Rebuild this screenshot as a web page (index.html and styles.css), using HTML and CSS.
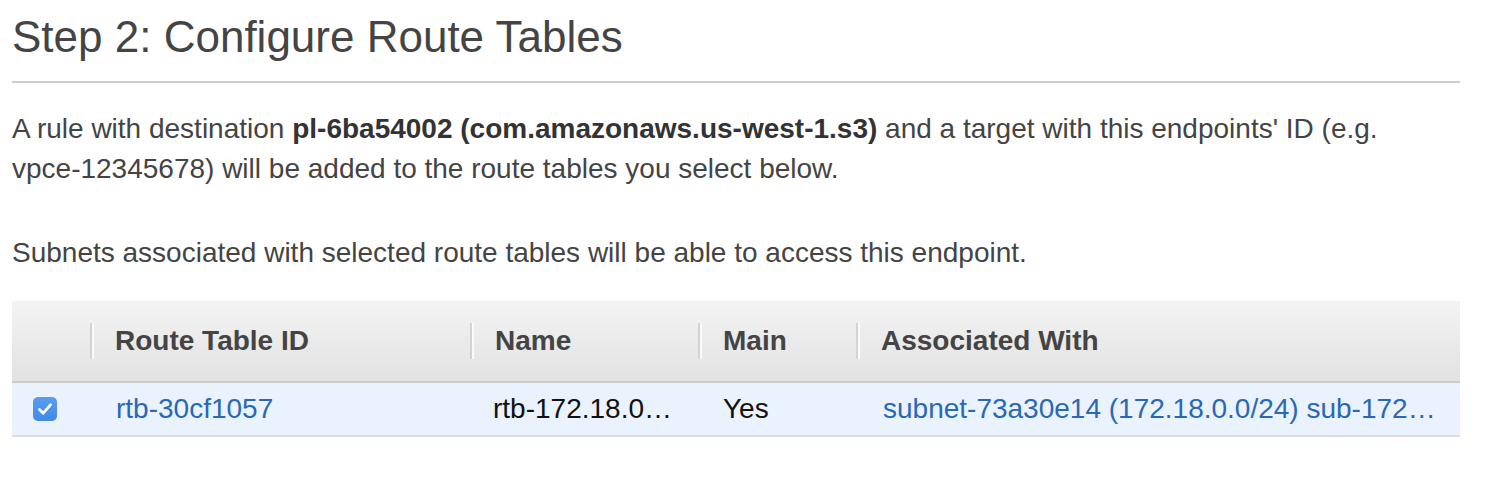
FILE: index.html
```html
<!DOCTYPE html>
<html>
<head>
<meta charset="utf-8">
<link rel="stylesheet" href="styles.css">
</head>
<body>
<div class="page">
  <h1 class="title">Step 2: Configure Route Tables</h1>
  <div class="rule"></div>
  <p class="para para1">A rule with destination <b>pl-6ba54002 (com.amazonaws.us-west-1.s3)</b> and a target with this endpoints' ID (e.g. vpce-12345678) will be added to the route tables you select below.</p>
  <p class="para para2">Subnets associated with selected route tables will be able to access this endpoint.</p>
  <div class="table">
    <div class="head">
      <div class="th"></div>
      <div class="th"><div class="sep">Route Table ID</div></div>
      <div class="th"><div class="sep">Name</div></div>
      <div class="th"><div class="sep">Main</div></div>
      <div class="th"><div class="sep">Associated With</div></div>
    </div>
    <div class="row">
      <div class="td check-cell">
        <span class="checkbox"><svg width="24" height="24" viewBox="0 0 24 24"><path d="M6.5 12.5 L10.2 16.2 L17.5 7.8" fill="none" stroke="#fff" stroke-width="2.8" stroke-linecap="round" stroke-linejoin="round"/></svg></span>
      </div>
      <div class="td link">rtb-30cf1057</div>
      <div class="td name">rtb-172.18.0.0-main-route-table</div>
      <div class="td plain">Yes</div>
      <div class="td link">subnet-73a30e14 (172.18.0.0/24) sub-172.18.0.0-private</div>
    </div>
  </div>
</div>
</body>
</html>
```

FILE: styles.css
```css
html, body {
  margin: 0;
  padding: 0;
  background: #fff;
}
.page {
  width: 1448px;
  padding: 0 0 0 12px;
  font-family: "Liberation Sans", Arial, sans-serif;
  color: #444;
}
.title {
  margin: 0;
  padding-top: 12px;
  font-size: 44px;
  font-weight: normal;
  line-height: 50px;
  color: #444;
}
.rule {
  margin-top: 19px;
  height: 2px;
  background: #ccc;
}
.para {
  margin: 0;
  padding-top: 26px;
  font-size: 28px;
  line-height: 40px;
  color: #444;
}
.para1 {
  max-width: 1400px;
}
.para b {
  font-weight: bold;
  color: #333;
}
.para2 {
  padding-top: 44px;
}
.table {
  margin-top: 28px;
}
.head, .row {
  display: grid;
  grid-template-columns: 78px 380px 228px 158px 1fr;
}
.head {
  height: 80px;
  background: linear-gradient(#f3f3f3, #e2e2e2);
  border-bottom: 2px solid #ccc;
  align-items: center;
}
.th {
  font-size: 28px;
  font-weight: bold;
  color: #444;
}
.sep {
  height: 36px;
  line-height: 36px;
  border-left: 2px solid #d3d3d3;
  box-shadow: inset 2px 0 0 #fafafa;
  padding-left: 23px;
}
.row {
  height: 52px;
  background: #eaf3fd;
  border-bottom: 2px solid #dcdcdc;
  align-items: center;
}
.td {
  font-size: 28px;
  line-height: 40px;
  padding: 0 22px 0 26px;
  white-space: nowrap;
  overflow: hidden;
  text-overflow: ellipsis;
  color: #111;
}
.td.link {
  color: #2a67b5;
}
.td.name {
  padding-left: 23px;
}
.td.plain {
  padding-left: 25px;
}
.td.link:last-child {
  padding-left: 27px;
}
.check-cell {
  padding: 0 0 0 21px;
  display: flex;
  align-items: center;
}
.checkbox {
  display: block;
  width: 24px;
  height: 24px;
  border-radius: 5px;
  background: linear-gradient(#5a9cf0, #4288e6);
}
.checkbox svg {
  display: block;
}
```
